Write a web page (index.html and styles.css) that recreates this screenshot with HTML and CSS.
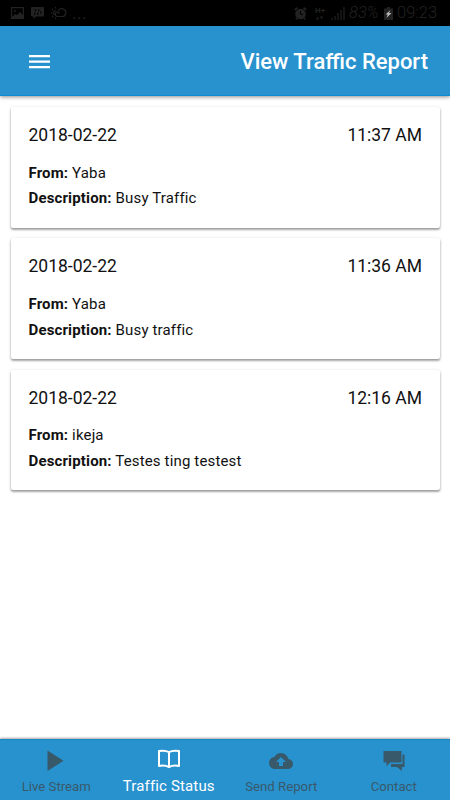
FILE: index.html
```
<!DOCTYPE html>
<html lang="en">

<head>
  <meta charset="UTF-8">
  <meta name="viewport" content="width=device-width, initial-scale=1">
  <title>View Traffic Report</title>
  <link rel="stylesheet" href="styles.css">
</head>

<body>

  <!-- status bar -->
  <div class="status">
    <div class="status-left">
      <svg width="13" height="12" viewBox="0 0 13 12"><path fill="none" stroke="currentColor" stroke-width="1.2" d="M.6.6h11.8v10.8H.6z"/><path fill="currentColor" d="M1 10l3-3 2 1 3-3 3 3v3H1z"/><circle cx="4" cy="4" r="1" fill="currentColor"/></svg>
      <svg width="13" height="12" viewBox="0 0 13 12"><path fill="currentColor" d="M1 0h11a1 1 0 0 1 1 1v7.500a1 1 0 0 1-1 1H5L2.500 12V9.500H1a1 1 0 0 1-1-1V1a1 1 0 0 1 1-1z"/><path stroke="#000" stroke-width="1" d="M4.500 2L4 4.500M8 2l-.5 2.500M4 5.500L3.500 8M7 5.500L6.500 8M10 4l-.5 2.500"/></svg>
      <svg width="16" height="12" viewBox="0 0 16 12"><path fill="none" stroke="currentColor" stroke-width="1.200" d="M8.500 6.500A2.200 2.200 0 1 0 6.300 9.500H11A3.900 3.900 0 1 0 7.300 4M3.500 8A2.500 2.500 0 0 1 5 3.500M4.500 0v1.500M1 2l1.200 1M0 6h1.500M1 10l1.200-1.200M4.500 10.500V12"/></svg>
      <span class="dots">...</span>
    </div>
    <div class="status-right">
      <svg width="13" height="13" viewBox="0 0 13 13"><circle cx="6.500" cy="7" r="5.300" fill="currentColor"/><path fill="none" stroke="currentColor" stroke-width="1.800" d="M.7 3L3.500.7M12.300 3L9.500.7M3 11l-1 1.500M10 11l1 1.500"/><path fill="none" stroke="#000" d="M6.500 4v3.300H9"/></svg>
      <span class="net">
        <b>H+</b>
        <svg width="9" height="4" viewBox="0 0 9 4"><path fill="currentColor" d="M1 3.500L2.500.5 4 3.500zM5 .5h3L6.500 3.500z"/></svg>
      </span>
      <svg class="signal" width="14" height="13" viewBox="0 0 14 13"><path stroke="currentColor" stroke-width="1.200" d="M1 13v-2M4 13V9M7 13V6M10 13V3M13 13V0"/></svg>
      <span class="percent">83%</span>
      <svg class="battery" width="9" height="13" viewBox="0 0 9 13"><path fill="currentColor" d="M3 0h3v1.500h3V13H0V1.500h3z"/><path fill="#bbb" d="M6.500 3L1.500 7.500h2.200L2.500 11l5-5H5z"/></svg>
      <span class="clock">09:23</span>
    </div>
  </div>

  <header class="header">
    <svg class="menu" width="21" height="14" viewBox="0 0 21 14"><path fill="#fff" d="M0 0h21v2.300H0zM0 5.500h21v2.300H0zM0 11h21v2.300H0z"/></svg>
    <h1>View Traffic Report</h1>
  </header>

  <!-- reports -->
  <main class="content">
    <div class="card">
      <div class="card-head"><span>2018-02-22</span><span>11:37 AM</span></div>
      <p><b>From:</b> Yaba</p>
      <p><b>Description:</b> Busy Traffic</p>
    </div>
    <div class="card">
      <div class="card-head"><span>2018-02-22</span><span>11:36 AM</span></div>
      <p><b>From:</b> Yaba</p>
      <p><b>Description:</b> Busy traffic</p>
    </div>
    <div class="card">
      <div class="card-head"><span>2018-02-22</span><span>12:16 AM</span></div>
      <p><b>From:</b> ikeja</p>
      <p><b>Description:</b> Testes ting testest</p>
    </div>
  </main>

  <!-- bottom tabs -->
  <nav class="tabs">
    <a class="tab">
      <svg width="24" height="22" viewBox="0 0 24 22"><path fill="currentColor" d="M3.500 .5l16 10.300L3.500 21z"/></svg>
      <span>Live Stream</span>
    </a>
    <a class="tab active">
      <svg width="24" height="22" viewBox="0 0 24 22"><path fill="none" stroke="currentColor" stroke-width="2" stroke-linejoin="round" d="M12 4.200C9.500 2.700 5.500 2.500 2 3v14.900c3.500-.5 7.500-.3 10 1.200 2.500-1.500 6.500-1.700 10-1.200V3c-3.500-.5-7.500-.3-10 1.200zV19"/></svg>
      <span>Traffic Status</span>
    </a>
    <a class="tab">
      <svg width="24" height="22" viewBox="0 0 24 22"><path fill="currentColor" d="M19.350 9.040A7.490 7.490 0 0 0 12 3C9.110 3 6.600 4.640 5.350 7.040A5.994 5.994 0 0 0 0 13c0 3.310 2.690 6 6 6h13c2.760 0 5-2.240 5-5 0-2.640-2.050-4.780-4.650-4.960zM14 12v4h-4v-4H7l5-5 5 5z"/></svg>
      <span>Send Report</span>
    </a>
    <a class="tab">
      <svg width="24" height="22" viewBox="0 0 24 22"><path fill="currentColor" d="M1.500 1h18v11.500H8l-3.500 4v-4h-3zM20.500 4.500h2v12.500h-2.700v4L15 17H9v-3h11.500z"/></svg>
      <span>Contact</span>
    </a>
  </nav>

</body>

</html>
```
FILE: styles.css
```
* {
  box-sizing: border-box;
}

body {
  margin: 0;
  height: 100vh;
  display: flex;
  flex-direction: column;
  overflow: hidden;
  background: #fff;
  color: #111;
  font-family: Roboto, "Liberation Sans", sans-serif;
}

/* status bar */
.status {
  height: 26px;
  flex: none;
  display: flex;
  justify-content: space-between;
  padding: 0 12px 0 11px;
  background: #000;
  color: #222;
}

.status-left,
.status-right {
  display: flex;
  align-items: center;
}

.status-left {
  gap: 7px;
}

.dots {
  font-size: 17px;
  line-height: 20px;
  letter-spacing: 0.5px;
  margin-left: -2px;
}

.net {
  display: flex;
  flex-direction: column;
  gap: 1px;
  width: 10px;
  margin: 0 6px 0 8px;
  font-size: 8px;
  line-height: 8px;
}

.percent,
.clock {
  font-size: 16.5px;
  font-weight: 300;
  line-height: 26px;
}

.percent {
  width: 33px;
  margin-left: 4px;
  font-style: italic;
}

.battery {
  margin-left: 2px;
}

.clock {
  width: 41px;
  margin-left: 4px;
}

/* header */
.header {
  height: 70px;
  flex: none;
  display: flex;
  align-items: center;
  justify-content: space-between;
  padding: 2px 22px 0 29px;
  background: #2892cf;
  border-bottom: 1px solid #0b8bd1;
  box-shadow: 0 1px 4px rgba(0, 0, 0, 0.45);
}

.header h1 {
  margin: 0;
  color: #fff;
  font-size: 22px;
  font-weight: 500;
  line-height: 26px;
}

/* cards */
.content {
  flex: 1;
  display: flex;
  flex-direction: column;
  gap: 10.5px;
  padding: 11px 10px 0 11px;
}

.card {
  height: 120.8px;
  padding: 17px 18px 0 17.5px;
  border-radius: 2px;
  background: #fff;
  box-shadow: 0 2px 2px rgba(0, 0, 0, 0.24), 0 1px 3px rgba(0, 0, 0, 0.26);
}

.card-head {
  display: flex;
  justify-content: space-between;
  margin-bottom: 14.8px;
  font-size: 17.5px;
  line-height: 22px;
}

.card p {
  margin: 0;
  font-size: 15px;
  letter-spacing: 0.15px;
  line-height: 25.6px;
}

.card b {
  font-weight: 700;
}

/* tabs */
.tabs {
  height: 61px;
  flex: none;
  display: grid;
  grid-template-columns: repeat(4, 1fr);
  background: #2892cf;
  border-top: 1px solid #1b88c5;
  box-shadow: 0 -1px 2px rgba(0, 0, 0, 0.35);
}

.tab {
  display: flex;
  flex-direction: column;
  align-items: center;
  padding: 10px 0 0;
  color: #385969;
  font-size: 13.2px;
  line-height: 16px;
}

.tab span {
  margin-top: 7px;
}

.tab.active {
  padding-top: 8px;
  color: #fff;
  font-size: 15px;
  letter-spacing: 0.15px;
}

.tab.active span {
  margin-top: 8px;
}
```
